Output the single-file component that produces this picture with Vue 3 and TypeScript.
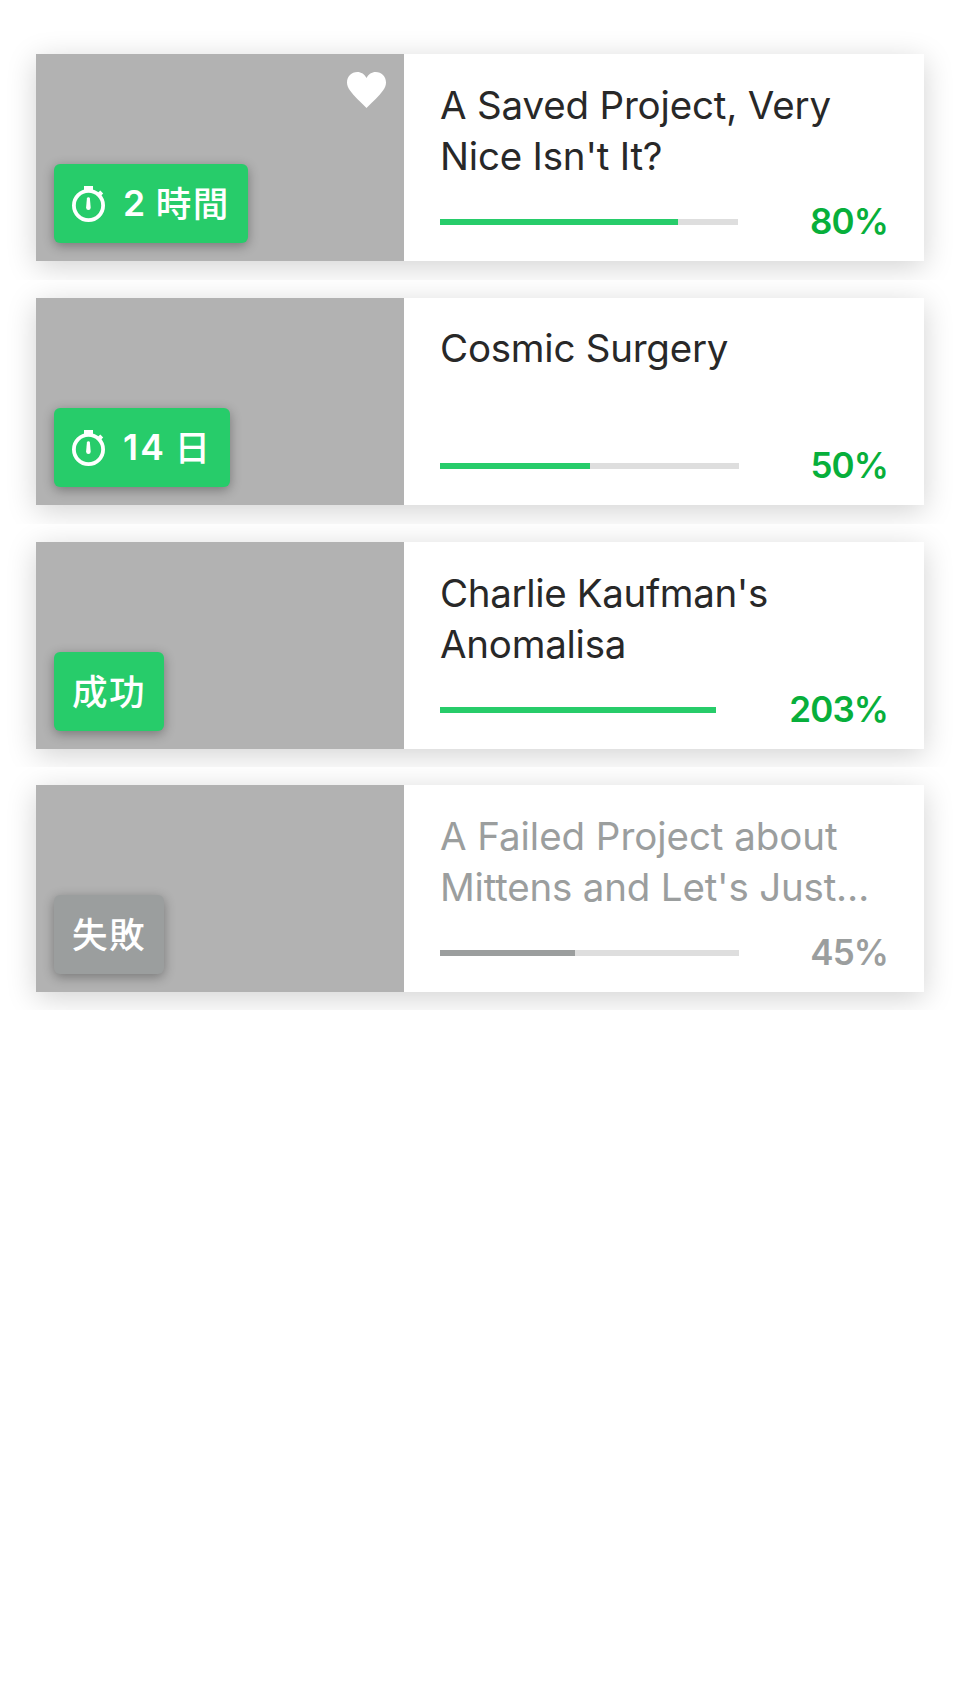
<script setup lang="ts">
interface TitleLine {
  text: string
  spacing: number
}

interface Project {
  lines: TitleLine[]
  amount: string
  unit: string
  timed: boolean
  saved: boolean
  failed: boolean
  percent: number
  track: number
}

const projects: Project[] = [
  {
    lines: [{ text: 'A Saved Project, Very', spacing: -0.17 }, { text: "Nice Isn't It?", spacing: -0.2 }],
    amount: '2', unit: '時間', timed: true, saved: true, failed: false, percent: 80, track: 298,
  },
  {
    lines: [{ text: 'Cosmic Surgery', spacing: -0.24 }],
    amount: '14', unit: '日', timed: true, saved: false, failed: false, percent: 50, track: 299,
  },
  {
    lines: [{ text: "Charlie Kaufman's", spacing: -0.35 }, { text: 'Anomalisa', spacing: -0.24 }],
    amount: '', unit: '成功', timed: false, saved: false, failed: false, percent: 203, track: 276,
  },
  {
    lines: [{ text: 'A Failed Project about', spacing: -0.05 }, { text: "Mittens and Let's Just…", spacing: -0.19 }],
    amount: '', unit: '失敗', timed: false, saved: false, failed: true, percent: 45, track: 299,
  },
]
</script>

<template>
  <main class="list">
    <section v-for="p in projects" :key="p.unit" class="row">
      <article class="card" :class="{ failed: p.failed }">
        <div class="photo">
          <svg v-if="p.saved" class="heart" viewBox="0 0 39 36">
            <path d="M19.5 36 C13 29.500 7 24 3 18.500 C1 15.600 0 13.500 0 10.500 C0 4.500 4.500 0 10.300 0 C14.200 0 17.700 2.300 19.500 6 C21.300 2.300 24.800 0 28.700 0 C34.500 0 39 4.500 39 10.500 C39 13.500 38 15.600 36 18.500 C32 24 26 29.500 19.500 36 Z" />
          </svg>
          <div class="badge">
            <svg v-if="p.timed" class="watch" viewBox="0 0 33 36">
              <circle cx="16.500" cy="19.500" r="14.600" />
              <path class="solid" d="M12 0 H21 V5 H12 Z" />
              <path class="solid" d="M25.300 7.300 L28.300 4.600 L31.200 7.500 L28.300 10.500 Z" />
              <path class="solid" d="M14.900 12.600 Q15.100 11.200 16.400 11.200 Q17.700 11.200 17.900 12.600 L18.700 21.800 Q18.600 24 16.400 24 Q14.200 24 14.100 21.800 Z" />
            </svg>
            <span v-if="p.amount" class="amount">{{ p.amount }}</span>
            <span class="unit">{{ p.unit }}</span>
          </div>
        </div>
        <div class="info">
          <h2 class="title">
            <span
              v-for="line in p.lines"
              :key="line.text"
              class="line"
              :style="{ letterSpacing: line.spacing + 'px' }"
            >{{ line.text }}</span>
          </h2>
          <div class="stats">
            <div class="track" :style="{ width: p.track + 'px' }">
              <div class="fill" :style="{ width: Math.min(p.percent, 100) + '%' }"></div>
            </div>
            <span class="percent">{{ p.percent }}%</span>
          </div>
        </div>
      </article>
    </section>
  </main>
</template>

<style>
body {
  background: #fff;
}
</style>

<style scoped>
.list {
  width: 960px;
  height: 1704px;
  box-sizing: border-box;
  overflow: hidden;
  font-family: Inter, "Noto Sans CJK JP", sans-serif;
}
.row {
  height: 243px;
  box-sizing: border-box;
  padding: 18px 36px 0;
  background: #fff;
  overflow: hidden;
}
.row:nth-child(2) {
  height: 244px;
}
.row:first-child {
  height: 280px;
  padding-top: 54px;
}
.card {
  display: flex;
  height: 207px;
  background: #fff;
  box-shadow: 0 6px 28px rgba(0, 0, 0, 0.18);
}
.photo {
  position: relative;
  display: flex;
  align-items: flex-end;
  width: 368px;
  box-sizing: border-box;
  padding: 18px;
  background: #b2b2b2;
}
.heart {
  position: absolute;
  top: 18px;
  right: 18px;
  width: 39px;
  height: 36px;
  fill: #fff;
}
.badge {
  display: flex;
  align-items: center;
  height: 79px;
  box-sizing: border-box;
  padding: 0 18px;
  border-radius: 6px;
  background: #27cc6a;
  box-shadow: 0 3px 12px rgba(0, 0, 0, 0.33);
  color: #fff;
  white-space: nowrap;
}
.watch {
  width: 33px;
  height: 36px;
  margin-right: 18px;
  fill: none;
}
.watch circle {
  stroke: #fff;
  stroke-width: 3.8;
}
.solid {
  fill: #fff;
}
.amount {
  margin-right: 8.3px;
  font-size: 35.5px;
  font-weight: 600;
  line-height: 79px;
  letter-spacing: 2.3px;
}
.unit {
  padding-top: 2px;
  font-size: 35.6px;
  font-weight: 500;
  line-height: 77px;
  letter-spacing: 1.4px;
}
.info {
  flex: 1;
  display: flex;
  flex-direction: column;
  justify-content: space-between;
  padding: 26px 36px 18px;
}
.title {
  margin: 0;
  font-size: 38.5px;
  font-weight: 400;
  line-height: 51px;
  color: #282828;
}
.line {
  display: block;
  white-space: nowrap;
}
.line:only-child {
  margin-top: -1px;
}
.stats {
  display: flex;
  align-items: center;
  justify-content: space-between;
  height: 42px;
}
.track {
  height: 6px;
  background: #dedede;
}
.fill {
  height: 6px;
  background: #27cc6a;
}
.percent {
  padding-bottom: 2px;
  font-size: 35px;
  font-weight: 600;
  line-height: 40px;
  letter-spacing: -0.9px;
  color: #07af3b;
}
.failed .badge,
.failed .fill {
  background: #9b9e9e;
}
.failed .title,
.failed .percent {
  color: #9b9e9e;
}
</style>
